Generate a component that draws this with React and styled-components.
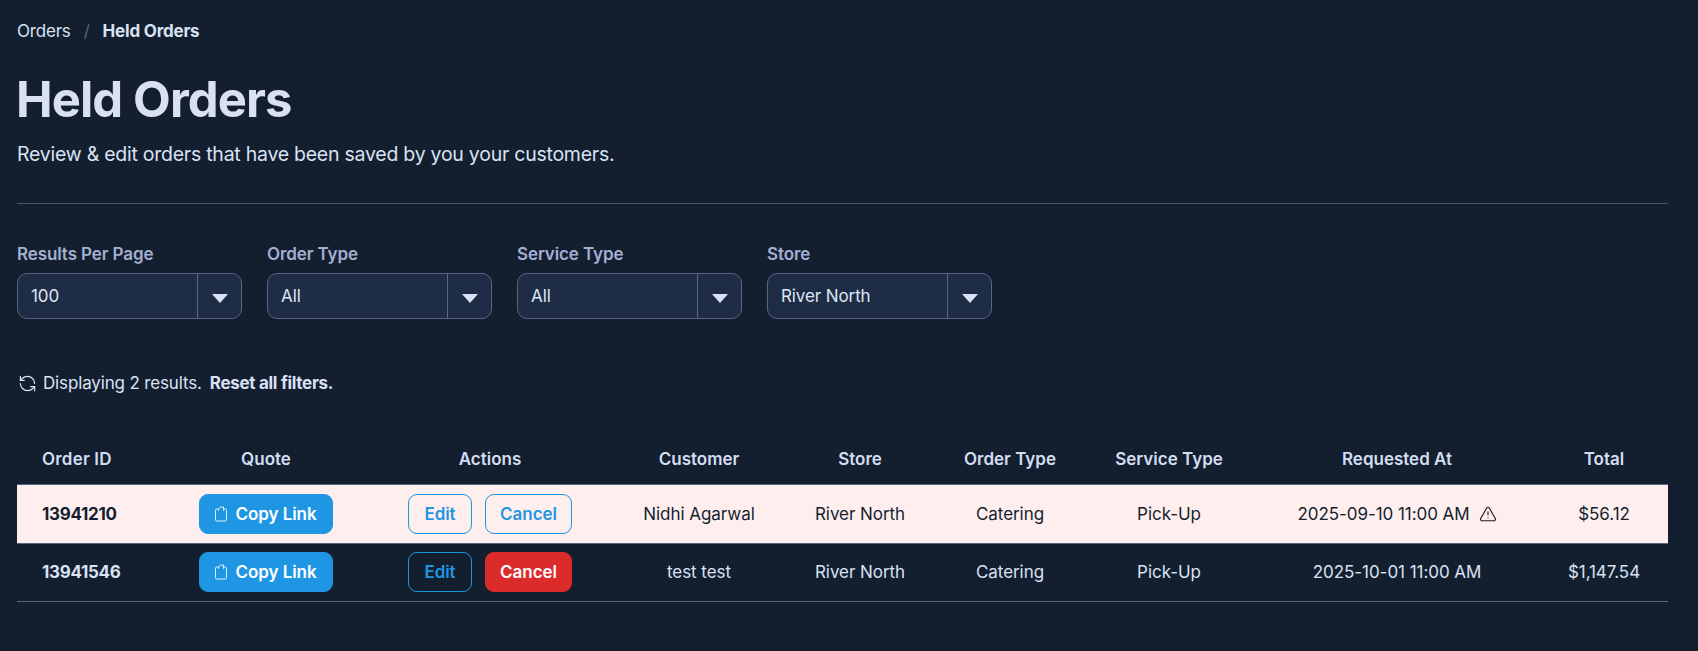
import React from 'react';
import styled, { createGlobalStyle } from 'styled-components';
import { RefreshCcw, TriangleAlert } from 'lucide-react';

const GlobalStyle = createGlobalStyle`
  html, body {
    margin: 0;
    background: #131f2f;
  }
  body {
    font-family: Inter, "Noto Sans", sans-serif;
    color: #d9e2f4;
  }
`;

const Page = styled.div`
  padding: 20px 30px 0 17px;
  min-height: 651px;
  box-sizing: border-box;
`;

const Breadcrumb = styled.nav`
  display: flex;
  align-items: center;
  font-size: 17px;
  letter-spacing: -0.2px;
  height: 22px;
`;

const Crumb = styled.span`
  font-weight: ${(p) => (p.$current ? 700 : 400)};
`;

const CrumbSep = styled.span`
  color: #56647f;
  margin: 0 13px;
`;

const Title = styled.h1`
  margin: 28px 0 0 -1px;
  font-size: 49px;
  line-height: 60px;
  font-weight: 700;
  letter-spacing: -0.9px;
  color: #d8e0f2;
`;

const Subtitle = styled.p`
  margin: 11px 0 0;
  font-size: 19.5px;
  line-height: 26px;
  letter-spacing: -0.25px;
  color: #d9e2f4;
`;

const Rule = styled.hr`
  border: 0;
  border-top: 1px solid #4b5873;
  margin: 36px 0 0;
`;

const Filters = styled.div`
  display: flex;
  gap: 25px;
  margin-top: 40px;
`;

const Filter = styled.label`
  display: block;
  width: 225px;
`;

const FilterLabel = styled.div`
  font-size: 17px;
  line-height: 20px;
  font-weight: 600;
  letter-spacing: -0.1px;
  color: #a3b0d2;
  margin-bottom: 9px;
`;

const Select = styled.div`
  display: flex;
  height: 46px;
  box-sizing: border-box;
  background: #1e2d45;
  border: 1px solid #5a6485;
  border-radius: 10px;
`;

const SelectValue = styled.div`
  flex: 1;
  display: flex;
  align-items: center;
  padding-left: 13px;
  font-size: 17px;
  letter-spacing: -0.1px;
  color: #dde5f6;
`;

const SelectArrow = styled.div`
  width: 44px;
  box-sizing: border-box;
  border-left: 1px solid #5a6485;
  display: flex;
  align-items: center;
  justify-content: center;

  &::after {
    content: '';
    border-left: 8.5px solid transparent;
    border-right: 8.5px solid transparent;
    border-top: 9px solid #d9e2f4;
    margin-top: 4px;
  }
`;

const Status = styled.div`
  display: flex;
  align-items: center;
  gap: 6px;
  margin-top: 54px;
  height: 20px;
  font-size: 17px;
  letter-spacing: -0.15px;
  padding-left: 1px;
`;

const Reset = styled.strong`
  font-weight: 700;
  margin-left: 2px;
  letter-spacing: -0.3px;
`;

const Table = styled.table`
  width: 100%;
  table-layout: fixed;
  border-collapse: collapse;
  margin-top: 41px;
`;

const Col = styled.col`
  width: ${(p) => p.$w}px;
`;

const Th = styled.th`
  height: 50px;
  padding: 0;
  padding-left: ${(p) => (p.$left ? '25px' : '0')};
  text-align: ${(p) => (p.$left ? 'left' : 'center')};
  font-size: 17px;
  font-weight: 600;
  letter-spacing: ${(p) => (p.$left ? '0.2px' : '0')};
  color: #d3ddf2;
  border-bottom: 1px solid #5a6485;
`;

const Row = styled.tr`
  background: ${(p) => (p.$warn ? '#ffeeee' : 'transparent')};
  color: ${(p) => (p.$warn ? '#131f2f' : '#d9e2f4')};
`;

const Td = styled.td`
  height: 57.5px;
  padding: 0;
  padding-left: ${(p) => (p.$left ? '25px' : '0')};
  text-align: ${(p) => (p.$left ? 'left' : 'center')};
  font-size: 17px;
  font-weight: ${(p) => (p.$left ? 700 : 400)};
  letter-spacing: ${(p) => (p.$left ? '-0.3px' : '-0.05px')};
  border-bottom: 1px solid #5a6485;
`;

const ButtonGroup = styled.div`
  display: flex;
  justify-content: center;
  gap: 13px;
`;

const Button = styled.button`
  display: inline-flex;
  align-items: center;
  justify-content: center;
  gap: 8px;
  height: 40px;
  width: ${(p) => p.$w}px;
  box-sizing: border-box;
  border-radius: 9px;
  font-family: inherit;
  font-size: 17px;
  font-weight: 600;
  letter-spacing: -0.05px;
  padding: 0;
  border: 1px solid ${(p) => (p.$variant === 'danger' ? '#dc2b2b' : '#1f96e4')};
  background: ${(p) =>
    p.$variant === 'danger' ? '#dc2b2b' : p.$variant === 'primary' ? '#1f96e4' : 'transparent'};
  color: ${(p) => (p.$variant === 'outline' ? '#1f96e4' : '#fff')};
`;

const WarnIcon = styled(TriangleAlert)`
  vertical-align: -3px;
  margin-left: 9px;
`;

function ClipboardIcon() {
  return (
    <svg width="12" height="16" viewBox="0 0 12 16" fill="none" stroke="#fff" strokeWidth="1" opacity="0.85">
      <path d="M3.5 3H1.8C1 3 .5 3.5 .5 4.3v9.4c0 .8.5 1.3 1.3 1.3h8.4c.8 0 1.3-.5 1.3-1.3V4.3c0-.8-.5-1.3-1.3-1.3H8.5" />
      <path d="M3.5 4.8V3L5.5 1H8.5v3.8" />
    </svg>
  );
}

const columns = [149, 200, 248, 170, 152, 148, 170, 286, 128];

const orders = [
  { id: '13941210', customer: 'Nidhi Agarwal', requested: '2025-09-10 11:00 AM', total: '$56.12', warn: true },
  { id: '13941546', customer: 'test test', requested: '2025-10-01 11:00 AM', total: '$1,147.54', warn: false },
];

const filters = [
  { label: 'Results Per Page', value: '100' },
  { label: 'Order Type', value: 'All' },
  { label: 'Service Type', value: 'All' },
  { label: 'Store', value: 'River North' },
];

export default function App() {
  return (
    <Page>
      <GlobalStyle />
      <Breadcrumb>
        <Crumb>Orders</Crumb>
        <CrumbSep>/</CrumbSep>
        <Crumb $current>Held Orders</Crumb>
      </Breadcrumb>
      <Title>Held Orders</Title>
      <Subtitle>Review &amp; edit orders that have been saved by you your customers.</Subtitle>
      <Rule />
      <Filters>
        {filters.map((f) => (
          <Filter key={f.label}>
            <FilterLabel>{f.label}</FilterLabel>
            <Select>
              <SelectValue>{f.value}</SelectValue>
              <SelectArrow />
            </Select>
          </Filter>
        ))}
      </Filters>
      <Status>
        <RefreshCcw size={19} strokeWidth={1.5} />
        <span>Displaying 2 results.</span>
        <Reset>Reset all filters.</Reset>
      </Status>
      <Table>
        <colgroup>
          {columns.map((w, i) => (
            <Col key={i} $w={w} />
          ))}
        </colgroup>
        <thead>
          <tr>
            <Th $left>Order ID</Th>
            <Th>Quote</Th>
            <Th>Actions</Th>
            <Th>Customer</Th>
            <Th>Store</Th>
            <Th>Order Type</Th>
            <Th>Service Type</Th>
            <Th>Requested At</Th>
            <Th>Total</Th>
          </tr>
        </thead>
        <tbody>
          {orders.map((o) => (
            <Row key={o.id} $warn={o.warn}>
              <Td $left>{o.id}</Td>
              <Td>
                <Button $variant="primary" $w={134}>
                  <ClipboardIcon />
                  Copy Link
                </Button>
              </Td>
              <Td>
                <ButtonGroup>
                  <Button $variant="outline" $w={64}>Edit</Button>
                  <Button $variant={o.warn ? 'outline' : 'danger'} $w={87}>Cancel</Button>
                </ButtonGroup>
              </Td>
              <Td>{o.customer}</Td>
              <Td>River North</Td>
              <Td>Catering</Td>
              <Td>Pick-Up</Td>
              <Td>
                {o.requested}
                {o.warn && <WarnIcon size={18} strokeWidth={1.5} />}
              </Td>
              <Td>{o.total}</Td>
            </Row>
          ))}
        </tbody>
      </Table>
    </Page>
  );
}
